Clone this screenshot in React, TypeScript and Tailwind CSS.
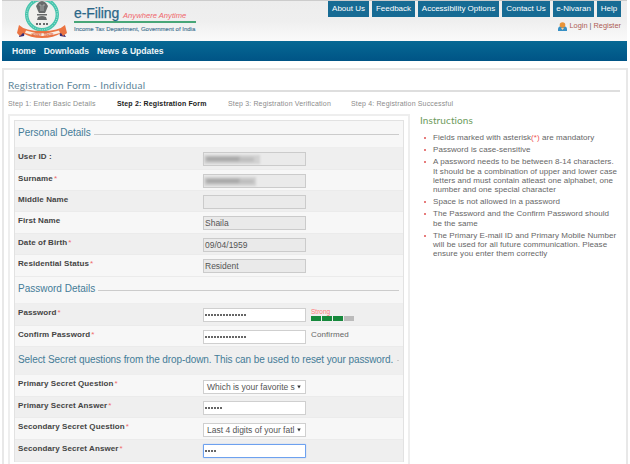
import type { ReactNode } from "react";

const sans = "font-[family-name:'Liberation_Sans',Arial,sans-serif]";
const gothic = "[font-family:Lato,sans-serif]";

function Req() {
  return <span className="ml-[1px] font-normal text-[#ef6a6a]">*</span>;
}

function Row({ label, req, h, dark, pad = "pt-[4px]", children }: {
  label: string; req?: boolean; h: string; dark?: boolean; pad?: string; children: ReactNode;
}) {
  return (
    <div className={`flex w-full shrink-0 border-b border-[#ebebeb] ${h} ${dark ? "bg-[#efefef]" : "bg-[#f7f7f7]"}`}>
      <div className="w-[188px] shrink-0 pl-[3px] pt-[4px] text-[8px] font-bold leading-[10px] tracking-[0.09px] text-[#444]">
        {label}{req && <Req />}
      </div>
      <div className={`flex items-start ${pad}`}>{children}</div>
    </div>
  );
}

function Field({ value = "" }: { value?: string }) {
  return <div className="flex h-[14px] w-[103px] items-center border border-[#cbcbcb] bg-[#eaeaea] pl-[1px] text-[8.5px] leading-[12px] text-[#555]">{value}</div>;
}

function Masked({ count, focus }: { count: number; focus?: boolean }) {
  return (
    <div className={`flex h-[14px] w-[103px] items-center gap-[1px] border bg-white pl-[1px] ${focus ? "rounded-[1px] border-[#6da1ef] shadow-[0_0_1px_#6da1ef]" : "border-[#cfcfcf]"}`}>
      {Array.from({ length: count }, (_, i) => <i key={i} className="size-[2px] rounded-full bg-[#333]" />)}
    </div>
  );
}

function Redacted({ w }: { w: string }) {
  return (
    <div className="flex h-[14px] w-[103px] items-center border border-[#cbcbcb] bg-[#eaeaea]">
      <div className={`flex h-[9px] items-center bg-[#d2d2d2] blur-[1px] ${w}`}>
        <div className="ml-[2px] h-[4px] w-[34px] bg-[#a1a1a1] blur-[1px]" />
        <div className="h-[3px] w-[14px] bg-[#b5b5b5] blur-[1px]" />
      </div>
    </div>
  );
}

function Choice({ value }: { value: string }) {
  return (
    <div className="flex h-[14px] w-[103px] items-center justify-between border border-[#cfcfcf] bg-white pl-[3px] pr-[4px] text-[8.5px] leading-[12px] text-[#555]">
      <span className="whitespace-nowrap">{value}</span>
      <svg className="h-[4px] w-[4px] shrink-0" viewBox="0 0 5 4"><path d="M.3 0h4.4L2.5 4z" fill="#333" /></svg>
    </div>
  );
}

function Section({ title, h, tone, width }: { title: string; h: string; tone: string; width: string }) {
  return (
    <div className={`flex shrink-0 items-center border-b border-[#eee] pb-[2px] pl-[3px] pr-[4px] text-[10px] leading-[12px] text-[#457c97] ${h} ${tone}`}>
      <span className={`whitespace-nowrap ${width}`}>{title}</span>
      <span className="ml-[4px] mt-[2px] h-px flex-1 bg-[#ccc]" />
    </div>
  );
}

function Emblem() {
  return (
    <svg className="h-[38px] w-[52px] shrink-0" viewBox="0 0 52 38">
      <circle cx="25" cy="15" r="17" fill="#f0f0ed" />
      <circle cx="25" cy="13.5" r="15.3" fill="none" stroke="#46c5ad" strokeWidth="3.4" />
      <circle cx="25" cy="13.5" r="15.3" fill="none" stroke="#d5eee6" strokeWidth=".8" strokeDasharray="1 1.3" />
      <g fill="#686b6b">
        <path d="M21 2q4-4 8 0l2 3-2 5-1 2h-6l-1-2-2-5z" />
        <path d="M20 13h10v1.6H20zM21 16q4-2 8 0l1 3H20z" />
        <path d="M19 22h2v2h-2zm3 0h2v2h-2zm4 0h2v2h-2zm3 0h2v2h-2z" />
      </g>
      <path d="M22 4h2v4m4-4h-2v4M23 9h4" fill="none" stroke="#b8bab9" strokeWidth=".8" />
      <path d="M1 29l7 1-1 5-5 1 1-3zM49 29l-7 1 1 5 6 1-2-3z" fill="#392b72" />
      <path d="M2 24q6 6 23 6t23-6l2 8-4 3-2-3q-7 5-19 5T6 32l-3 3-3-3z" fill="#eb7442" />
      <path d="M9 29.5q16 5.5 33 0l1 2.5q-18 6-35 0z" fill="#faeee2" />
      <text x="25" y="35" textAnchor="middle" fontFamily="Liberation Sans, sans-serif" fontSize="3.8" fontWeight="bold" fill="#dc6335">आयकर विभाग</text>
    </svg>
  );
}

const links = [
  ["About Us", "w-[41px]"], ["Feedback", "w-[43px]"], ["Accessibility Options", "w-[81px]"],
  ["Contact Us", "w-[48px]"], ["e-Nivaran", "w-[41px]"], ["Help", "w-[24px]"],
];

function Header() {
  return (
    <header className="ml-[2px] flex h-[41px] w-[625px] border-t border-[#ccc] bg-gradient-to-b from-[#ededed] via-[#efefef] to-[#fafafa] pl-[15px]">
      <Emblem />
      <div className="ml-[5px] w-[122px] pt-[5px]">
        <div className="flex h-[15px] items-baseline whitespace-nowrap">
          <span className="w-[49px] text-[14px] leading-[15px] tracking-[-0.1px] text-[#2b6788] [-webkit-text-stroke:0.25px_#2b6788]">e-Filing</span>
          <span className="text-[7.6px] italic leading-[9px] tracking-[0.02px] text-[#ef666b]">Anywhere Anytime</span>
        </div>
        <div className="h-[2px] bg-[#48a678]" />
        <div className="mt-[2px] whitespace-nowrap text-[6px] leading-[8px] text-[#4b7794] [-webkit-text-stroke:0.15px_#4b7794]">Income Tax Department, Government of India</div>
      </div>
      <div className="ml-auto flex flex-col pr-[6px]">
        <div className="flex gap-[3px]">
          {links.map(([name, w]) => <a key={name} className={`h-[16px] whitespace-nowrap bg-[#176b94] text-center text-[8px] leading-[16px] text-white ${w}`}>{name}</a>)}
        </div>
        <div className="mt-[4px] flex h-[10px] items-center justify-end whitespace-nowrap text-[7.4px] leading-[10px] text-[#ad5c54]">
          <svg className="mr-[2px] size-[9px]" viewBox="0 0 9 9"><path d="M0 9V7q0-3 4.5-3T9 7v2z" fill="#3790c5"/><circle cx="4.5" cy="3" r="2.8" fill="#e89438"/><path d="M3 6l1.5 2L6 6z" fill="#f6d2a2"/></svg>
          Login <span className="px-[2px] text-[#666]">|</span> Register
        </div>
      </div>
    </header>
  );
}

export default function App() {
  return (
    <div className={`flex h-[464px] w-[630px] flex-col overflow-hidden bg-white ${sans}`}>
      <Header />
      <nav className="ml-[2px] flex h-[20px] w-[625px] items-center gap-[8px] bg-gradient-to-b from-[#076994] to-[#005486] pl-[10px] text-[8.6px] font-bold leading-[20px] tracking-[-0.06px] text-[#edf5f8]">
        <span>Home</span><span>Downloads</span><span>News &amp; Updates</span>
      </nav>
      <main className="ml-[2px] mt-[7px] flex h-[396px] w-[626px] flex-col border-x-2 border-t-2 border-[#e8e8e8] pl-[4px]">
        <div className="mr-[6px] h-[22px] shrink-0 border-b-2 border-[#dedede]">
          <h1 className={`pt-[8px] text-[10px] leading-[14px] tracking-[0.28px] text-[#5d8498] ${gothic}`}>Registration Form - Individual</h1>
        </div>
        <div className="flex h-[22px] shrink-0 items-center whitespace-nowrap text-[7px] leading-[9px] tracking-[0.16px] text-[#8c8c8c]">
          <span className="w-[109px]">Step 1: Enter Basic Details</span>
          <span className="w-[111px] font-bold text-[#222]">Step 2: Registration Form</span>
          <span className="w-[123px]">Step 3: Registration Verification</span>
          <span>Step 4: Registration Successful</span>
        </div>
        <div className="flex min-h-0 flex-1">
          <section className="w-[402px] shrink-0 border-x-2 border-t-2 border-[#eee] pl-[4px] pr-[4px] pt-[4px]">
            <div className="flex w-[390px] flex-col border-x border-t border-[#e2e2e2] bg-[#f7f7f7]">
              <Section title="Personal Details" h="h-[27px]" tone="bg-[#f7f7f7]" width="w-[72px]" />
              <Row label="User ID :" h="h-[22px]" dark><Redacted w="w-[56px]" /></Row>
              <Row label="Surname" req h="h-[21px]"><Redacted w="w-[52px]" /></Row>
              <Row label="Middle Name" h="h-[21px]" dark><Field /></Row>
              <Row label="First Name" h="h-[22px]"><Field value="Shaila" /></Row>
              <Row label="Date of Birth" req h="h-[21px]" dark><Field value="09/04/1959" /></Row>
              <Row label="Residential Status" req h="h-[22px]"><Field value="Resident" /></Row>
              <Section title="Password Details" h="h-[27px]" tone="bg-[#f7f7f7]" width="w-[76px]" />
              <Row label="Password" req h="h-[22px]" dark>
                <Masked count={14} />
                <div className="ml-[5px] w-[43px]">
                  <div className="text-[6.5px] leading-[8px] text-[#ff7777]">Strong</div>
                  <div className="flex h-[5px] gap-[1px]">
                    <i className="flex-1 bg-[#16893c]" /><i className="flex-1 bg-[#16893c]" /><i className="flex-1 bg-[#16893c]" /><i className="flex-1 bg-[#bbb]" />
                  </div>
                </div>
              </Row>
              <Row label="Confirm Password" req h="h-[21px]"><Masked count={14} /><span className="ml-[5px] text-[8px] leading-[10px] tracking-[0.1px] text-[#666]">Confirmed</span></Row>
              <Section title="Select Secret questions from the drop-down. This can be used to reset your password." h="h-[28px]" tone="bg-[#efefef]" width="w-[375px] tracking-[-0.09px]" />
              <Row label="Primary Secret Question" req h="h-[22px]" pad="pt-[5px]"><Choice value="Which is your favorite s" /></Row>
              <Row label="Primary Secret Answer" req h="h-[21px]" dark><Masked count={6} /></Row>
              <Row label="Secondary Secret Question" req h="h-[22px]" pad="pt-[5px]"><Choice value="Last 4 digits of your fatl" /></Row>
              <Row label="Secondary Secret Answer" req h="h-[22px]" dark><Masked count={4} focus /></Row>
            </div>
          </section>
          <aside className="ml-[10px] w-[204px] text-[8px] leading-[9.2px] tracking-[0.06px] text-[#666]">
            <h2 className={`text-[10px] leading-[12px] tracking-[0.1px] text-[#6c9b5c] ${gothic}`}>Instructions</h2>
            <ul className="mt-[7px] flex flex-col gap-[3px] whitespace-nowrap">
              {[
                [<>Fields marked with asterisk<span className="text-[#ef5555]">(*)</span> are mandatory</>],
                ["Password is case-sensitive"],
                ["A password needs to be between 8-14 characters.", "It should be a combination of upper and lower case", "letters and must contain atleast one alphabet, one", "number and one special character"],
                ["Space is not allowed in a password"],
                ["The Password and the Confirm Password should", "be the same"],
                ["The Primary E-mail ID and Primary Mobile Number", "will be used for all future communication. Please", "ensure you enter them correctly"],
              ].map((lines, i) => (
                <li key={i} className="flex"><i className="ml-[4px] mr-[7px] mt-[4px] size-[2px] shrink-0 rounded-full bg-[#df5050]" />
                  <div>{lines.map((line, j) => <div key={j}>{line}</div>)}</div>
                </li>
              ))}
            </ul>
          </aside>
        </div>
      </main>
    </div>
  );
}
